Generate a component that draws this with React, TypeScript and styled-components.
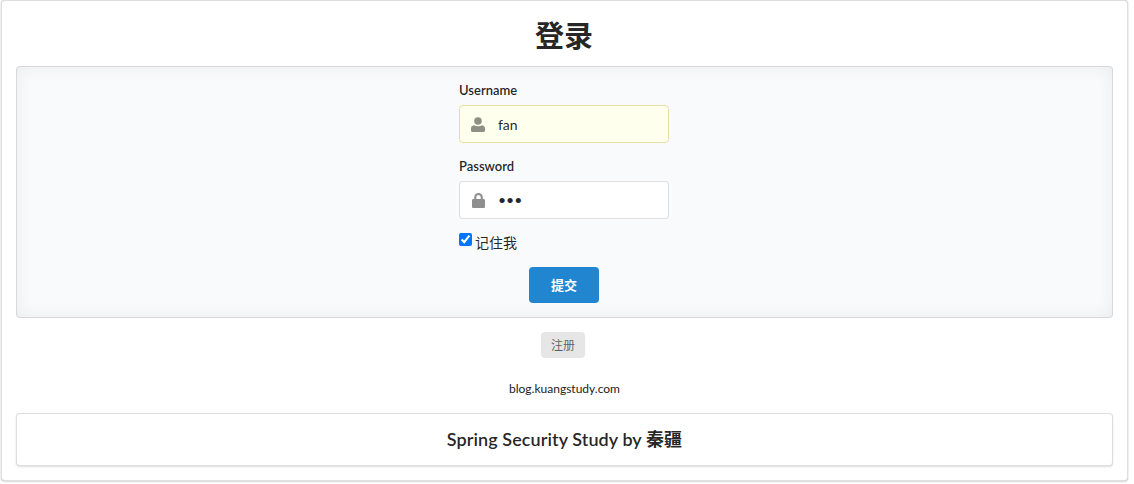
import * as React from "react";
import styled, { createGlobalStyle } from "styled-components";

const FONT = `Lato, "Noto Sans CJK SC", "Helvetica Neue", Arial, sans-serif`;

const GlobalStyle = createGlobalStyle`
    html, body {
        margin: 0;
        padding: 0;
        background: #ffffff;
    }

    * {
        box-sizing: border-box;
    }

    body {
        font-family: ${FONT};
        font-size: 14px;
        line-height: 1.4285em;
        color: rgba(0, 0, 0, 0.87);
    }
`;

const Page = styled.div`
    width: 1134px;
    height: 484px;
    padding: 0 6px 3px 1px;
`;

const Segment = styled.div`
    height: 100%;
    padding: 14px;
    background: #ffffff;
    border: 1px solid rgba(34, 36, 38, 0.15);
    border-radius: 4px;
    box-shadow: 0 1px 2px 0 rgba(34, 36, 38, 0.15), 0 0 1px rgba(34, 36, 38, 0.25);
`;

const Title = styled.h1`
    margin: 0 1px 15px 0;
    height: 36px;
    font-size: 29px;
    line-height: 41px;
    font-weight: 700;
    text-align: center;
    color: rgba(0, 0, 0, 0.87);
`;

const FormPanel = styled.div`
    display: flex;
    justify-content: center;
    height: 252px;
    padding: 15px 1px 0 0;
    background: #f9fafb;
    border: 1px solid rgba(34, 36, 38, 0.15);
    border-radius: 4px;
    box-shadow: inset 0 0 16px rgba(34, 36, 38, 0.07);
`;

const Form = styled.form`
    display: flex;
    flex-direction: column;
    width: 210px;
    margin: 0;
`;

const Field = styled.div`
    margin-bottom: 15px;
`;

const Label = styled.label`
    display: block;
    height: 16px;
    margin-bottom: 7px;
    font-size: 13px;
    line-height: 16px;
    font-weight: 600;
    color: rgba(0, 0, 0, 0.87);
`;

const InputWrap = styled.div`
    position: relative;
    height: 38px;
`;

const IconSlot = styled.span`
    position: absolute;
    top: 0;
    left: 0;
    display: flex;
    align-items: center;
    justify-content: center;
    width: 38px;
    height: 38px;
    color: rgba(0, 0, 0, 0.87);
    opacity: 0.5;
`;

const Input = styled.input<{ $filled?: boolean }>`
    display: block;
    width: 100%;
    height: 38px;
    padding: 0 14px ${(p) => (p.$filled ? "0" : "2px")} 38px;
    font-family: ${FONT};
    font-size: 14px;
    color: rgba(0, 0, 0, 0.87);
    background: ${(p) => (p.$filled ? "#ffffee" : "#ffffff")};
    border: 1px solid ${(p) => (p.$filled ? "#e7e0a4" : "rgba(34, 36, 38, 0.15)")};
    border-radius: 4px;
    outline: none;
`;

const Remember = styled.label`
    display: flex;
    align-items: flex-start;
    height: 20px;
    margin-top: -2px;
    font-size: 14px;
    line-height: 22px;
    color: rgba(0, 0, 0, 0.87);
`;

const Check = styled.input`
    width: 13px;
    height: 13px;
    margin: 1px 3px 0 0;
    accent-color: #0075ff;
`;

const SubmitRow = styled.div`
    display: flex;
    justify-content: center;
    margin-top: 15px;
`;

const SubmitButton = styled.button`
    width: 70px;
    height: 36px;
    padding: 0 0 2px;
    font-family: ${FONT};
    font-size: 13px;
    font-weight: 700;
    color: #ffffff;
    background: #2185d0;
    border: none;
    border-radius: 4px;
`;

const RegisterRow = styled.div`
    display: flex;
    justify-content: center;
    margin-top: 14px;
    padding-right: 3px;
`;

const RegisterButton = styled.button`
    width: 44px;
    height: 26px;
    padding: 0 0 2px;
    font-family: ${FONT};
    font-size: 12px;
    color: rgba(0, 0, 0, 0.6);
    background: #e6e6e7;
    border: none;
    border-radius: 4px;
`;

const SiteLink = styled.div`
    margin-top: 24px;
    height: 14px;
    font-size: 12px;
    line-height: 14px;
    text-align: center;
    color: #1b1c1d;
`;

const FooterCard = styled.div`
    display: flex;
    align-items: center;
    justify-content: center;
    height: 53px;
    margin-top: 17px;
    padding: 0 0 2px;
    font-size: 18px;
    font-weight: 600;
    letter-spacing: 0.08px;
    color: rgba(0, 0, 0, 0.87);
    background: #ffffff;
    border: 1px solid rgba(34, 36, 38, 0.15);
    border-radius: 4px;
    box-shadow: 0 1px 2px 0 rgba(34, 36, 38, 0.15);
`;

const UserIcon = () => (
    <svg width="14" height="15" viewBox="0 0 14 15" fill="currentColor">
        <circle cx="7" cy="4" r="3.8" />
        <path d="M3 8.2c1.1.7 2.500 1 4 1s2.900-.3 4-1c1.800.3 3 1.500 3 3.300V13.500c0 .8-.6 1.500-1.400 1.500H1.400C.6 15 0 14.300 0 13.500v-2c0-1.800 1.200-3 3-3.300z" />
    </svg>
);

const LockIcon = () => (
    <svg width="13" height="15" viewBox="0 0 13 15" fill="currentColor">
        <path d="M2.200 6V4.300C2.200 1.900 4.100 0 6.500 0s4.300 1.900 4.300 4.300V6h.9c.7 0 1.300.6 1.300 1.300v6.400c0 .7-.6 1.300-1.300 1.300H1.300C.6 15 0 14.400 0 13.700V7.300C0 6.600.6 6 1.300 6h.9zm2.100 0h4.400V4.300c0-1.200-1-2.200-2.200-2.200s-2.200 1-2.200 2.200V6z" />
    </svg>
);

const App: React.FC = () => {
    return (
        <Page>
            <GlobalStyle />
            <Segment>
                <Title>登录</Title>
                <FormPanel>
                    <Form onSubmit={(e) => e.preventDefault()}>
                        <Field>
                            <Label>Username</Label>
                            <InputWrap>
                                <Input $filled defaultValue="fan" />
                                <IconSlot><UserIcon /></IconSlot>
                            </InputWrap>
                        </Field>
                        <Field>
                            <Label>Password</Label>
                            <InputWrap>
                                <Input type="password" defaultValue="123" />
                                <IconSlot><LockIcon /></IconSlot>
                            </InputWrap>
                        </Field>
                        <Remember>
                            <Check type="checkbox" defaultChecked />
                            记住我
                        </Remember>
                        <SubmitRow>
                            <SubmitButton type="submit">提交</SubmitButton>
                        </SubmitRow>
                    </Form>
                </FormPanel>
                <RegisterRow>
                    <RegisterButton type="button">注册</RegisterButton>
                </RegisterRow>
                <SiteLink>blog.kuangstudy.com</SiteLink>
                <FooterCard>Spring Security Study by 秦疆</FooterCard>
            </Segment>
        </Page>
    );
};

export default App;
